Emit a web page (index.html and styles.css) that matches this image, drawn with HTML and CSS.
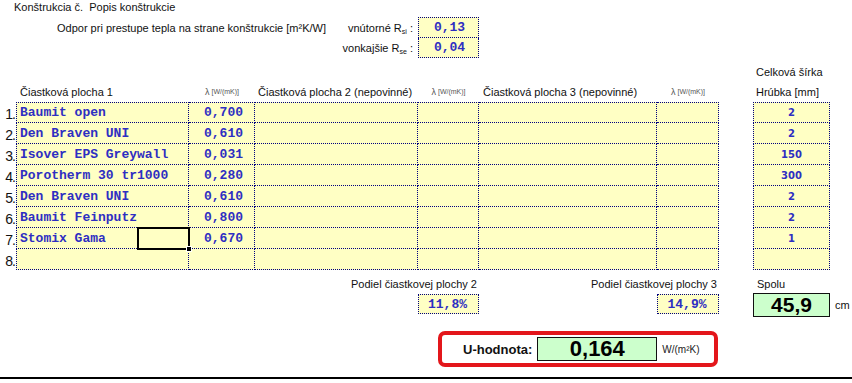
FILE: index.html
```html
<!DOCTYPE html>
<html lang="sk">
<head>
<meta charset="utf-8">
<title>Konštrukcia</title>
<link rel="stylesheet" href="styles.css">
</head>
<body>
<div class="sheet">
  <div class="title s10">Konštrukcia č.&nbsp; Popis konštrukcie</div>

  <div class="odpor s4"><span>Odpor pri prestupe tepla na strane konštrukcie [m²K/W]</span><span class="rlab">vnútorné R<sub>si</sub> :</span></div>
  <div class="ybox top">0,13</div>
  <div class="s5"></div>

  <div class="odpor s4"><span class="rlab">vonkajšie R<sub>se</sub> :</span></div>
  <div class="ybox">0,04</div>
  <div class="s5"></div>

  <div class="s10"></div>

  <div class="s8"></div>
  <div class="lab s2">Celková šírka</div>

  <div></div>
  <div class="lab hd1">Čiastková plocha 1</div>
  <div class="lam">λ<small>[W/(mK)]</small></div>
  <div class="lab hd2">Čiastková plocha 2 (nepovinné)</div>
  <div class="lam">λ<small>[W/(mK)]</small></div>
  <div class="lab hd3">Čiastková plocha 3 (nepovinné)</div>
  <div class="lam">λ<small>[W/(mK)]</small></div>
  <div></div>
  <div class="lab hd4">Hrúbka [mm]</div>
  <div></div>

  <div class="num">1.</div><div class="c first ls name">Baumit open</div><div class="c first val">0,700</div><div class="c first"></div><div class="c first"></div><div class="c first"></div><div class="c first"></div><div></div><div class="c first ls thk">2</div><div></div>
  <div class="num">2.</div><div class="c ls name">Den Braven UNI</div><div class="c val">0,610</div><div class="c"></div><div class="c"></div><div class="c"></div><div class="c"></div><div></div><div class="c ls thk">2</div><div></div>
  <div class="num">3.</div><div class="c ls name">Isover EPS Greywall</div><div class="c val">0,031</div><div class="c"></div><div class="c"></div><div class="c"></div><div class="c"></div><div></div><div class="c ls thk">150</div><div></div>
  <div class="num">4.</div><div class="c ls name">Porotherm 30 tr1000</div><div class="c val">0,280</div><div class="c"></div><div class="c"></div><div class="c"></div><div class="c"></div><div></div><div class="c ls thk">300</div><div></div>
  <div class="num">5.</div><div class="c ls name">Den Braven UNI</div><div class="c val">0,610</div><div class="c"></div><div class="c"></div><div class="c"></div><div class="c"></div><div></div><div class="c ls thk">2</div><div></div>
  <div class="num">6.</div><div class="c ls name">Baumit Feinputz</div><div class="c val">0,800</div><div class="c"></div><div class="c"></div><div class="c"></div><div class="c"></div><div></div><div class="c ls thk">2</div><div></div>
  <div class="num">7.</div><div class="c ls name selhost">Stomix Gama<span class="sel"><span class="handle"></span></span></div><div class="c val">0,670</div><div class="c"></div><div class="c"></div><div class="c"></div><div class="c"></div><div></div><div class="c ls thk">1</div><div></div>
  <div class="num">8.</div><div class="c ls name"></div><div class="c val"></div><div class="c"></div><div class="c"></div><div class="c"></div><div class="c"></div><div></div><div class="c ls thk"></div><div></div>

  <div class="s10"></div>

  <div class="s3"></div>
  <div class="lab rgt s2">Podiel čiastkovej plochy 2</div>
  <div class="lab rgt s2">Podiel čiastkovej plochy 3</div>
  <div></div>
  <div class="lab spolu">Spolu</div>
  <div></div>

  <div class="s4"></div>
  <div class="ybox top pct">11,8%</div>
  <div></div>
  <div class="ybox top pct">14,9%</div>
  <div></div>
  <div class="gbox total">45,9</div>
  <div class="lab cm">cm</div>

  <div class="s10"></div>

  <div class="s4"></div>
  <div class="ubox s3">
    <span class="ulab">U-hodnota:</span>
    <span class="gbox uval">0,164</span>
    <span class="unit">W/(m²K)</span>
  </div>
  <div class="s3"></div>
</div>
<div class="rule"></div>
</body>
</html>
```

FILE: styles.css
```css
html, body {
  margin: 0;
  padding: 0;
  background: #ffffff;
}
body {
  width: 852px;
  height: 383px;
  overflow: hidden;
  font-family: "Liberation Sans", Arial, sans-serif;
  font-size: 11px;
  color: #111;
}
.sheet {
  display: grid;
  grid-template-columns: 16px 173px 66px 163px 61px 178px 62px 34px 77px 22px;
  grid-template-rows: 17px 21px 20px 4px 20px 20px repeat(8, 21px) 4px 20px 20px 17px 36px;
}
.sheet > div {
  box-sizing: border-box;
  min-width: 0;
}
.s2 { grid-column: span 2; }
.s3 { grid-column: span 3; }
.s4 { grid-column: span 4; }
.s5 { grid-column: span 5; }
.s8 { grid-column: span 8; }
.s10 { grid-column: span 10; }

.title {
  padding-left: 14px;
  display: flex;
  align-items: center;
  padding-bottom: 3px;
}
.odpor {
  display: flex;
  justify-content: flex-end;
  align-items: center;
  gap: 22px;
  padding-right: 5px;
  white-space: nowrap;
}
.rlab sub {
  font-size: 7px;
  vertical-align: -2px;
  line-height: 0;
}
.ybox {
  background: #ffffc4;
  border: 1px dotted #000080;
  border-top: none;
  display: flex;
  align-items: center;
  justify-content: center;
  font-family: "Liberation Mono", "Courier New", monospace;
  font-weight: bold;
  font-size: 13px;
  color: #2e2ec2;
  padding-left: 2px;
}
.ybox.top { border-top: 1px dotted #000080; }
.ybox.pct { padding-left: 0; padding-right: 2px; }

.lab {
  display: flex;
  align-items: center;
  white-space: nowrap;
}
.s2.lab { padding-left: 3px; }
.hd1 { padding-left: 4px; }
.hd2 { padding-left: 3px; }
.hd3 { padding-left: 4px; }
.hd4 { padding-left: 3px; }
.rgt { justify-content: flex-end; padding-right: 2px; }
.s2.lab.rgt { padding-left: 0; }
.spolu { padding-left: 4px; }
.cm { padding-left: 5px; padding-top: 2px; }

.lam {
  display: flex;
  align-items: center;
  justify-content: center;
  font-size: 9px;
  color: #555;
  padding-bottom: 1px;
}
.lam small {
  font-size: 7px;
  margin-left: 2px;
}

.num {
  display: flex;
  align-items: center;
  justify-content: flex-end;
  font-size: 14px;
  padding-right: 1px;
  padding-top: 2px;
  letter-spacing: -1px;
}

.c {
  background: #ffffc4;
  border-right: 1px dotted #000080;
  border-bottom: 1px dotted #000080;
  display: flex;
  align-items: center;
  font-family: "Liberation Mono", "Courier New", monospace;
  font-weight: bold;
  font-size: 13px;
  color: #2e2ec2;
}
.c.first { border-top: 1px dotted #000080; }
.c.ls { border-left: 1px dotted #000080; }
.name { padding-left: 3px; white-space: nowrap; }
.val { justify-content: flex-end; padding-right: 11px; }
.thk {
  justify-content: center;
  font-family: "DejaVu Sans", Verdana, sans-serif;
  font-size: 10px;
}

.selhost { position: relative; }
.sel {
  position: absolute;
  right: -2px;
  top: -1px;
  width: 53px;
  height: 23px;
  box-sizing: border-box;
  border: 2px solid #000;
}
.handle {
  position: absolute;
  right: -4px;
  bottom: -4px;
  width: 4px;
  height: 4px;
  background: #000;
  border: 1px solid #fff;
}

.gbox {
  background: #ccffcc;
  border: 1px solid #111;
  box-sizing: border-box;
  display: flex;
  align-items: center;
  justify-content: center;
  font-weight: bold;
  color: #000;
}
.total {
  margin-top: -1px;
  height: 24px;
  font-size: 21px;
}

.ubox {
  margin-left: 20px;
  width: 280px;
  height: 36px;
  box-sizing: border-box;
  border: 4px solid #e3161b;
  border-radius: 7px;
  display: flex;
  align-items: center;
  padding-left: 21px;
}
.ulab {
  font-weight: bold;
  font-size: 13px;
  color: #111;
}
.uval {
  margin-left: 5px;
  width: 120px;
  height: 24px;
  font-size: 22px;
}
.unit {
  margin-left: 5px;
  font-size: 10px;
  color: #222;
}

.rule {
  margin-top: 10px;
  height: 2px;
  background: #000;
}
```
